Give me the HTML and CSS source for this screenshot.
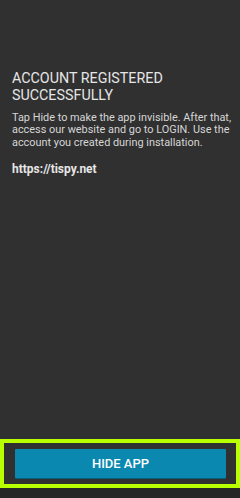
FILE: index.html
```
<!DOCTYPE html>
<html>
<head>
<meta charset="utf-8">
<link rel="stylesheet" href="styles.css">
</head>
<body>
<div class="screen">
  <main class="content">
    <h1 class="title">ACCOUNT REGISTERED SUCCESSFULLY</h1>
    <p class="desc">Tap Hide to make the app invisible. After that, access our website and go to LOGIN. Use the account you created during installation.</p>
    <p class="link">https://tispy.net</p>
  </main>
  <footer class="footer">
    <div class="highlight">
      <button class="hide-btn">HIDE APP</button>
    </div>
  </footer>
  <div class="navbar"></div>
</div>
</body>
</html>
```
FILE: styles.css
```
html, body {
  margin: 0;
  padding: 0;
  background: #303030;
}
.screen {
  width: 240px;
  height: 498px;
  display: flex;
  flex-direction: column;
  font-family: Roboto, "Noto Sans", sans-serif;
  background: #303030;
}
.content {
  flex: 1;
  padding: 70px 6px 0 12px;
}
.title {
  margin: 0;
  font-size: 14.3px;
  font-weight: 400;
  line-height: 17px;
  color: #e6e6e6;
  width: 160px;
}
.desc {
  margin: 8px 0 0 0;
  font-size: 10.9px;
  line-height: 12.3px;
  color: #d6d6d6;
}
.link {
  margin: 13px 0 0 0;
  font-size: 12px;
  font-weight: 700;
  line-height: 14px;
  color: #e6e6e6;
}
.footer {
  height: 49px;
}
.highlight {
  box-sizing: border-box;
  height: 49px;
  border: 4px solid #b8ff00;
  padding: 6px 10px 5px 11px;
}
.hide-btn {
  display: block;
  width: 100%;
  height: 29px;
  border: none;
  border-radius: 1px;
  background: #0a88b0;
  box-shadow: 0 1px 0 #075e7a;
  color: #ffffff;
  font-family: Roboto, "Noto Sans", sans-serif;
  font-size: 13px;
  font-weight: 500;
  padding: 0;
}
.navbar {
  height: 10px;
  background: #262626;
}
```
